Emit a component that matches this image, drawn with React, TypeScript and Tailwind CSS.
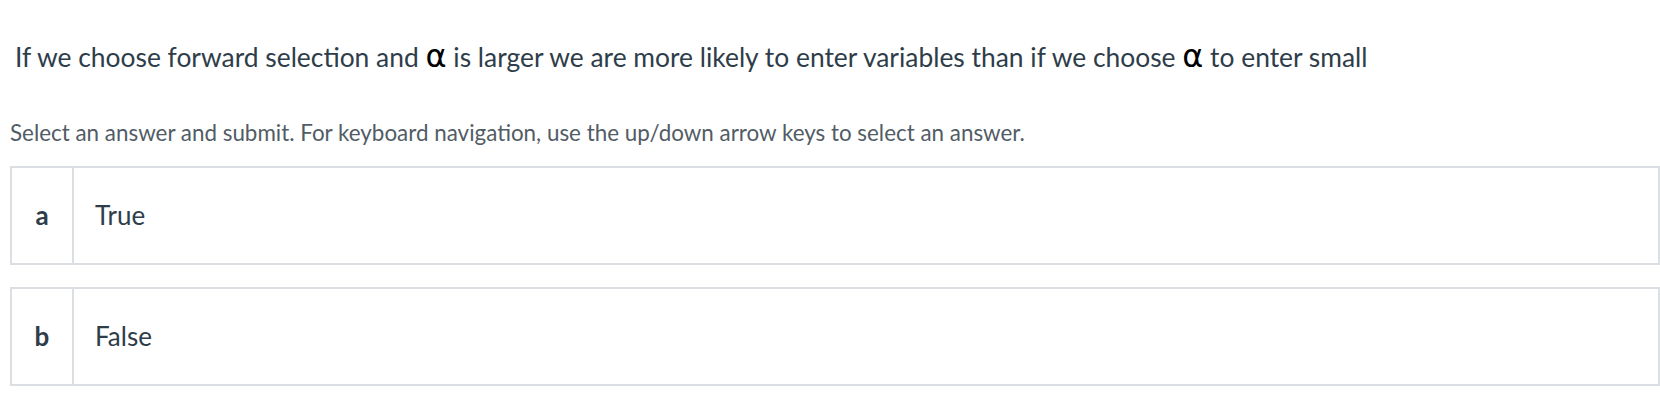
import React from "react"

const options = [
  { key: "a", label: "True" },
  { key: "b", label: "False" },
]

function Alpha() {
  return (
    <span className="font-['DejaVu_Sans',sans-serif] text-[32px] leading-none text-black">α</span>
  )
}

export default function App() {
  return (
    <div className="min-h-[404px] w-[1660px] bg-white pl-[10px] pt-[37px] font-['Lato',sans-serif]">
      {/* Question */}
      <p className="pl-[5px] text-[26.4px] leading-[40px] text-[#2e3d49]">
        If we choose forward selection and <Alpha /> is larger we are more likely to enter variables than if we choose <Alpha /> to enter small
      </p>

      <p className="mt-[41px] text-[22.4px] leading-[30px] text-[#525c65]">
        Select an answer and submit. For keyboard navigation, use the up/down arrow keys to select an answer.
      </p>

      {/* Options */}
      <div className="mt-[18px] flex flex-col gap-[22px]">
        {options.map((o) => (
          <div
            key={o.key}
            role="radio"
            aria-checked={false}
            className="flex h-[99px] border-2 border-[#dbdee2] bg-white"
          >
            <div className="flex w-[62px] shrink-0 items-center justify-center border-r-2 border-[#dbdee2] text-[26px] font-bold text-[#2e3d49]">
              {o.key}
            </div>
            <div className="flex items-center pl-[21px] text-[26px] text-[#2e3d49]">{o.label}</div>
          </div>
        ))}
      </div>
    </div>
  )
}
